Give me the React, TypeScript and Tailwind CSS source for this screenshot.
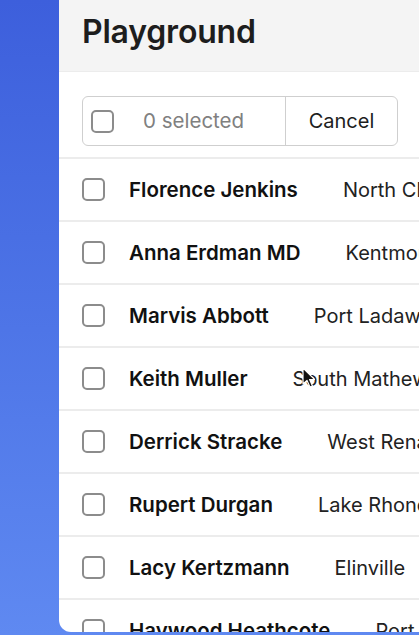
import React from 'react'

const people = [
  { name: 'Florence Jenkins', city: 'North Charlottestad' },
  { name: 'Anna Erdman MD', city: 'Kentmouth' },
  { name: 'Marvis Abbott', city: 'Port Ladawnfurt' },
  { name: 'Keith Muller', city: 'South Mathewview' },
  { name: 'Derrick Stracke', city: 'West Renafort' },
  { name: 'Rupert Durgan', city: 'Lake Rhoncester' },
  { name: 'Lacy Kertzmann', city: 'Elinville' },
  { name: 'Haywood Heathcote', city: 'Port Elmore' },
]

function Box({ className = '' }: { className?: string }) {
  return (
    <span
      className={`block w-[23px] h-[23px] shrink-0 rounded-[5px] border-2 border-[#8c8c8c] bg-white ${className}`}
    />
  )
}

function Cursor() {
  return (
    <svg
      className="absolute left-[302px] top-[367px] pointer-events-none"
      width="14"
      height="22"
      viewBox="0 0 14 22"
    >
      <path
        d="M1 1 L1 17 L5 13.5 L8 20 L10.5 19 L7.6 12.6 L12.5 12.4 Z"
        fill="#111"
        stroke="#fff"
        strokeWidth="1.2"
        strokeLinejoin="round"
      />
    </svg>
  )
}

export default function App() {
  return (
    <div
      className="relative w-[419px] h-[635px] overflow-hidden bg-gradient-to-b from-[#3d5fdc] to-[#5f89f1] pl-[59px] pb-[3px] flex"
      style={{ fontFamily: 'Inter, "Liberation Sans", Arial, sans-serif' }}
    >
      <div className="flex-1 flex flex-col bg-white rounded-bl-[12px] overflow-hidden">
        <div className="h-[72px] shrink-0 bg-[#f4f4f4] border-b border-[#ececec] px-[23px] flex items-center">
          <h1 className="text-[32px] font-semibold text-[#1d1d1d] tracking-[-0.2px] leading-none -mt-[8px]">
            Playground
          </h1>
        </div>

        <div className="shrink-0 px-[23px] pt-[24px] pb-[11px] border-b-2 border-[#ececec]">
          <div className="w-[316px] h-[50px] flex rounded-[6px] border border-[#cfcfcf]">
            <div className="w-[203px] flex items-center gap-[29px] pl-[8px] border-r border-[#cfcfcf]">
              <Box />
              <span className="text-[20.5px] text-[#808080]">0 selected</span>
            </div>
            <div className="flex-1 flex items-center justify-center text-[20px] text-[#1d1d1d]">
              Cancel
            </div>
          </div>
        </div>

        <div className="flex-1">
          {people.map((p) => (
            <div
              key={p.name}
              className="h-[63px] flex items-center px-[23px] border-b-2 border-[#ececec] whitespace-nowrap"
            >
              <Box />
              <span className="ml-[24px] mt-[1px] text-[20.5px] font-semibold text-[#111]">{p.name}</span>
              <span className="ml-[45px] mt-[1px] text-[20px] text-[#222]">{p.city}</span>
            </div>
          ))}
        </div>
      </div>
      <Cursor />
    </div>
  )
}
